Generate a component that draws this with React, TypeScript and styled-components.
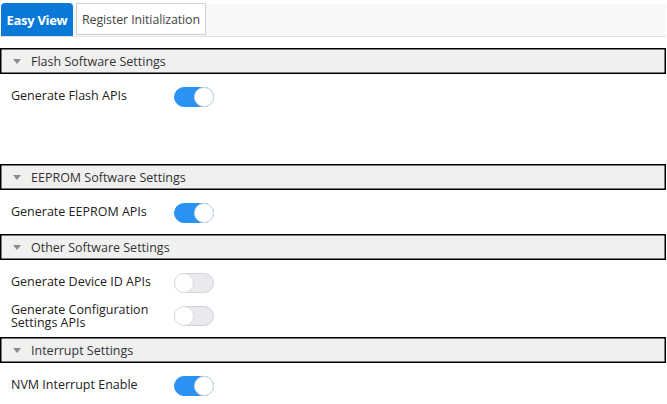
import React from "react";
import styled, { createGlobalStyle } from "styled-components";

const Global = createGlobalStyle`
  html, body { margin: 0; padding: 0; background: #ffffff; }
  body { font-family: "Open Sans", "Noto Sans", sans-serif; color: #222; }
`;

const Page = styled.div`
  width: 667px;
  padding-top: 4px;
`;

const TabBar = styled.div`
  display: flex;
  align-items: flex-end;
  gap: 3px;
  height: 33px;
  width: 666px;
  padding-left: 1px;
  box-sizing: border-box;
  background: #f7f8fa;
  border-bottom: 1px solid #e2e2e2;
`;

const Tab = styled.div<{ $active?: boolean; $width: number }>`
  display: flex;
  align-items: center;
  justify-content: center;
  box-sizing: border-box;
  width: ${(p) => p.$width}px;
  height: ${(p) => (p.$active ? "33px" : "32px")};
  margin-bottom: ${(p) => (p.$active ? "0" : "1px")};
  border-radius: ${(p) => (p.$active ? "4px 4px 0 0" : "0")};
  background: ${(p) => (p.$active ? "#0a78d6" : "#ffffff")};
  border: ${(p) => (p.$active ? "none" : "1px solid #cfcfcf")};
  color: ${(p) => (p.$active ? "#ffffff" : "#444")};
  font-weight: ${(p) => (p.$active ? 700 : 400)};
  font-size: ${(p) => (p.$active ? "13px" : "12.4px")};
  letter-spacing: ${(p) => (p.$active ? "-0.3px" : "-0.1px")};
  white-space: nowrap;
`;

const Sections = styled.div`
  display: flex;
  flex-direction: column;
  margin-top: 11px;
`;

const Section = styled.section`
  display: flex;
  flex-direction: column;
`;

const Header = styled.div`
  display: flex;
  align-items: center;
  gap: 10px;
  box-sizing: border-box;
  height: 26px;
  width: 666px;
  padding-left: 12px;
  background: #f0f0f0;
  border: 1px solid #000;
  box-shadow: inset 0 0 0 0.5px #000;
  color: #333;
  font-size: 12.5px;
`;

const Caret = styled.span`
  width: 0;
  height: 0;
  border-left: 4px solid transparent;
  border-right: 4px solid transparent;
  border-top: 5px solid #8a8a8a;
  margin-top: 1px;
`;

const Body = styled.div<{ $minHeight?: number }>`
  display: flex;
  flex-direction: column;
  padding: 6px 0 5px;
  min-height: ${(p) => (p.$minHeight ? `${p.$minHeight}px` : "auto")};
  box-sizing: border-box;
`;

const Row = styled.div`
  display: grid;
  grid-template-columns: 163px 40px;
  align-items: center;
  min-height: 33px;
  padding-left: 11px;
`;

const Label = styled.span<{ $single: boolean }>`
  font-size: 12.5px;
  line-height: 13px;
  color: #222;
  margin-bottom: ${(p) => (p.$single ? "3px" : "0")};
`;

const Track = styled.div<{ $on: boolean }>`
  position: relative;
  box-sizing: border-box;
  width: 40px;
  height: 20px;
  border-radius: 10px;
  background: ${(p) => (p.$on ? "#2a92f2" : "#e8eaed")};
  border: 1px solid ${(p) => (p.$on ? "#2a92f2" : "#d4d4d4")};
`;

const Knob = styled.div<{ $on: boolean }>`
  position: absolute;
  top: -1px;
  ${(p) => (p.$on ? "right: -1px;" : "left: -1px;")}
  width: 20px;
  height: 20px;
  box-sizing: border-box;
  border-radius: 50%;
  background: #ffffff;
  border: 1px solid #dcdcdc;
`;

const Toggle = ({ on }: { on: boolean }) => (
  <Track $on={on}>
    <Knob $on={on} />
  </Track>
);

type Item = { label: string[]; on: boolean };
type Sec = { title: string; items: Item[]; minBody?: number };

const data: Sec[] = [
  { title: "Flash Software Settings", items: [{ label: ["Generate Flash APIs"], on: true }], minBody: 90 },
  { title: "EEPROM Software Settings", items: [{ label: ["Generate EEPROM APIs"], on: true }] },
  {
    title: "Other Software Settings",
    items: [
      { label: ["Generate Device ID APIs"], on: false },
      { label: ["Generate Configuration", "Settings APIs"], on: false },
    ],
  },
  { title: "Interrupt Settings", items: [{ label: ["NVM Interrupt Enable"], on: true }] },
];

export default function App() {
  return (
    <>
      <Global />
      <Page>
        <TabBar>
          <Tab $active $width={72}>Easy View</Tab>
          <Tab $width={130}>Register Initialization</Tab>
        </TabBar>
        <Sections>
          {data.map((s) => (
            <Section key={s.title}>
              <Header>
                <Caret />
                {s.title}
              </Header>
              <Body $minHeight={s.minBody}>
                {s.items.map((it, i) => (
                  <Row key={i}>
                    <Label $single={it.label.length === 1}>
                      {it.label.map((l, j) => (
                        <React.Fragment key={j}>
                          {j > 0 && <br />}
                          {l}
                        </React.Fragment>
                      ))}
                    </Label>
                    <Toggle on={it.on} />
                  </Row>
                ))}
              </Body>
            </Section>
          ))}
        </Sections>
      </Page>
    </>
  );
}
